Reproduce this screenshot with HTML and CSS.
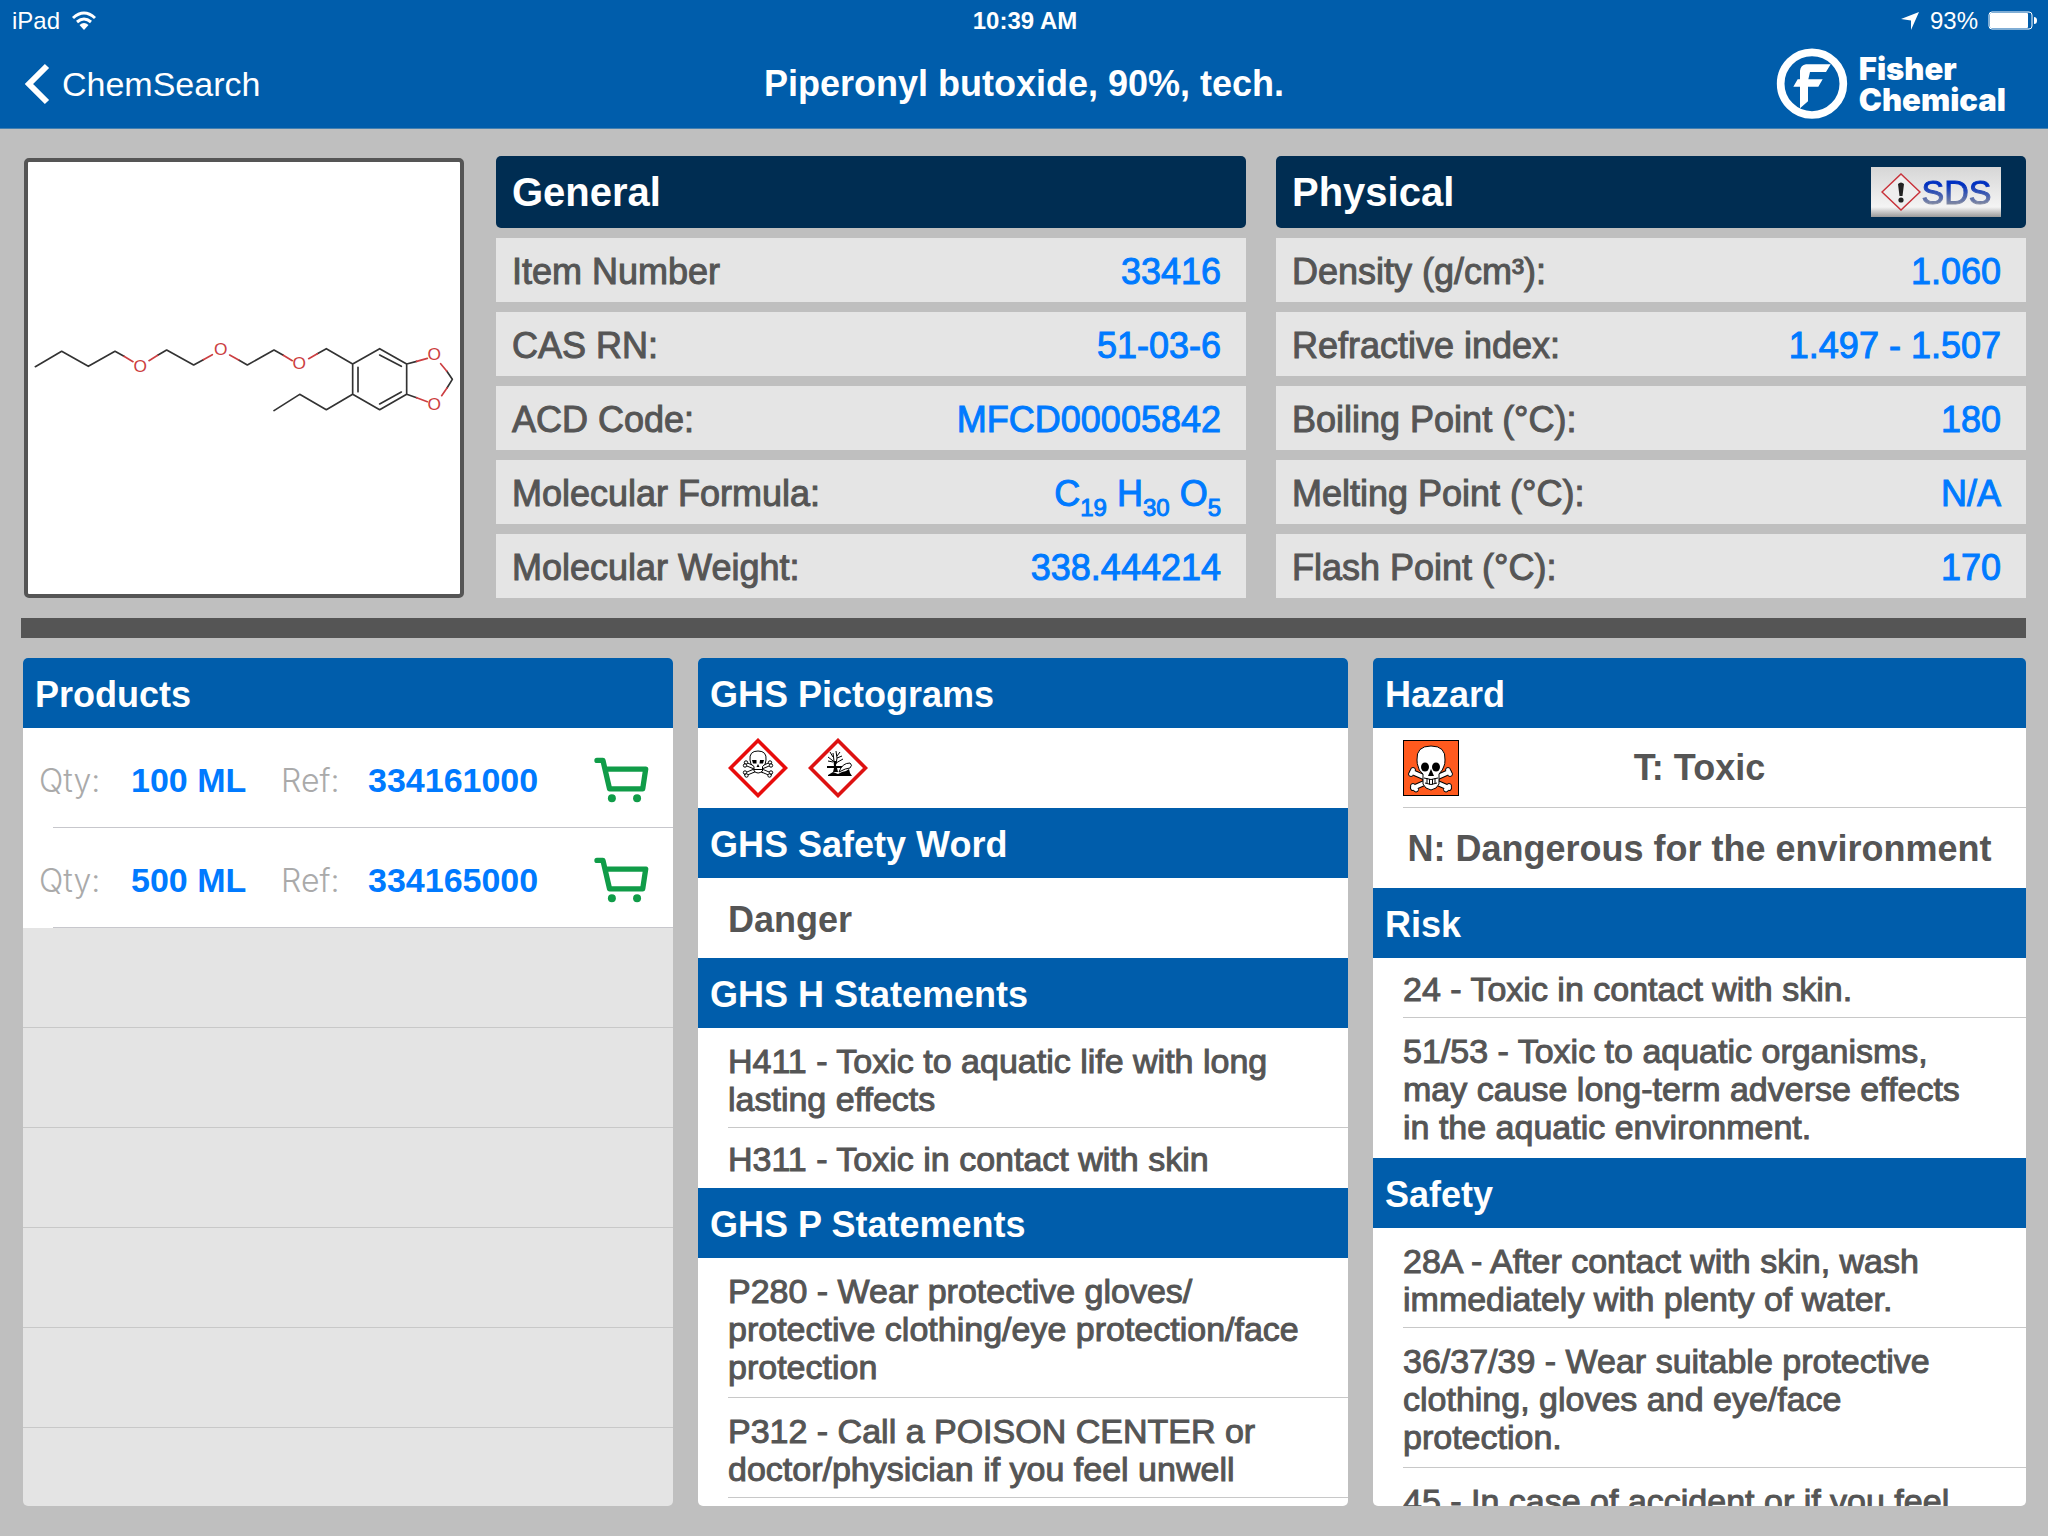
FILE: index.html
```html
<!DOCTYPE html>
<html lang="en">
<head>
<meta charset="utf-8">
<title>Piperonyl butoxide, 90%, tech.</title>
<link rel="stylesheet" href="styles.css">
</head>
<body>
<svg class="defs" aria-hidden="true">
  <symbol id="cart" viewBox="44 112 166 138">
    <path d="M53 122H71L91 208H191L200 148H79" fill="none" stroke="#109c48" stroke-width="16" stroke-linecap="round" stroke-linejoin="round"/>
    <circle cx="98" cy="236" r="12" fill="#109c48"/><circle cx="174" cy="236" r="12" fill="#109c48"/>
  </symbol>
</svg>
<header class="top">
  <div class="status">
    <div class="status-side">iPad
      <svg width="26" height="20" viewBox="0 0 26 20" fill="none" stroke="#fff" stroke-width="3"><path d="M2 7Q13-3 24 7M6 11Q13 5 20 11"/><path d="M8.500 14Q13 10 17.500 14L13 19Z" fill="#fff" stroke="none"/></svg>
    </div>
    <div class="time">10:39 AM</div>
    <div class="status-side status-end">
      <svg width="20" height="20" viewBox="0 0 20 20"><path d="M19 1L11 19V9.500L1 8Z" fill="#fff"/></svg>
      <span class="percent">93%</span>
      <svg width="50" height="20" viewBox="0 0 50 20"><rect x="1" y="1" width="43" height="17" rx="3" fill="none" stroke="#fff"/><rect x="2" y="2" width="38" height="15" rx="1" fill="#fff"/><path d="M46 6Q49 6 49 9.500Q49 13 46 13Z" fill="#fff"/></svg>
    </div>
  </div>
  <nav class="nav">
    <a class="back" href="#"><svg width="26" height="42" viewBox="0 0 26 42"><path d="M23 3L5 21L23 39" fill="none" stroke="#fff" stroke-width="6"/></svg>ChemSearch</a>
    <h1 class="title">Piperonyl butoxide, 90%, tech.</h1>
    <div class="brand">
      <svg width="72" height="72" viewBox="148 146 216 216"><circle cx="256" cy="253" r="94" fill="none" stroke="#fff" stroke-width="23"/><path fill="#fff" d="M238 195H312L298 218H250L245 240H288L275 262H244V306L220 327V262H200L213 240H220V214Q222 198 238 195Z"/></svg>
      <span class="brand-name">Fisher<br>Chemical</span>
    </div>
  </nav>
</header>
<main class="page">
  <section class="summary">
    <div class="structure">
      <svg viewBox="24 -474 1296 1296" role="img" aria-label="Chemical structure">
        <g fill="none" stroke="#333" stroke-width="5" stroke-linecap="round" stroke-linejoin="round">
          <path d="M46 140L125 94L205 139L285 94L312 109M413 106L440 90L521 135L550 119M656 120L682 135L762 90L790 106M892 101L919 86L998 132V223L919 269L839 223L762 272M998 132L1079 86L1160 132V223L1079 269L998 223M1014 142V215M1079 105L1144 139M1079 252L1144 216M1160 132L1190 124M1160 223L1190 233M1280 153L1297 178L1281 204"/>
          <path stroke="#cc3f42" d="M312 109L339 125M387 122L413 106M550 119L577 104M629 105L656 120M790 106L817 122M866 116L892 101M1190 124L1222 115M1190 233L1222 245M1262 131L1280 153M1281 204L1265 227"/>
        </g>
        <g class="atoms"><text x="361" y="155">O</text><text x="602" y="106">O</text><text x="838" y="148">O</text><text x="1243" y="121">O</text><text x="1243" y="270">O</text></g>
      </svg>
    </div>
    <section class="facts">
      <h2 class="facts-head">General</h2>
      <dl class="fact-list">
        <div class="fact"><dt>Item Number</dt><dd>33416</dd></div>
        <div class="fact"><dt>CAS RN:</dt><dd>51-03-6</dd></div>
        <div class="fact"><dt>ACD Code:</dt><dd>MFCD00005842</dd></div>
        <div class="fact"><dt>Molecular Formula:</dt><dd>C<sub>19</sub> H<sub>30</sub> O<sub>5</sub></dd></div>
        <div class="fact"><dt>Molecular Weight:</dt><dd>338.444214</dd></div>
      </dl>
    </section>
    <section class="facts">
      <h2 class="facts-head">Physical
        <button class="sds" type="button"><svg width="40" height="38" viewBox="0 0 40 38"><path d="M20 1L39 19L20 37L1 19Z" fill="#eee" stroke="#c8323a" stroke-width="1.500"/><path d="M17 11Q20 8 23 11L21.500 23H18.500Z" fill="#222"/><circle cx="20" cy="27" r="2.600" fill="#222"/></svg><span class="sds-text">SDS</span></button>
      </h2>
      <dl class="fact-list">
        <div class="fact"><dt>Density (g/cm³):</dt><dd>1.060</dd></div>
        <div class="fact"><dt>Refractive index:</dt><dd>1.497 - 1.507</dd></div>
        <div class="fact"><dt>Boiling Point (°C):</dt><dd>180</dd></div>
        <div class="fact"><dt>Melting Point (°C):</dt><dd>N/A</dd></div>
        <div class="fact"><dt>Flash Point (°C):</dt><dd>170</dd></div>
      </dl>
    </section>
  </section>
  <hr class="divider">
  <div class="panels">
    <section class="panel panel-products">
      <h2 class="bar">Products</h2>
      <ul class="products">
        <li class="product"><span class="hint">Qty:</span><span class="val">100 ML</span><span class="hint">Ref:</span><span class="val">334161000</span><button class="cart" type="button" aria-label="Add to cart"><svg width="55" height="46"><use href="#cart"/></svg></button></li>
        <li class="product"><span class="hint">Qty:</span><span class="val">500 ML</span><span class="hint">Ref:</span><span class="val">334165000</span><button class="cart" type="button" aria-label="Add to cart"><svg width="55" height="46"><use href="#cart"/></svg></button></li>
      </ul>
      <div class="empty-rows"></div>
    </section>
    <section class="panel">
      <h2 class="bar">GHS Pictograms</h2>
      <div class="pictograms">
        <svg width="60" height="60" viewBox="0 0 60 60" role="img" aria-label="Acute toxicity">
          <path d="M30 2.500L57.500 30L30 57.500L2.500 30Z" fill="#fff" stroke="#e80c0c" stroke-width="3.600"/>
          <g fill="none" stroke-linecap="round"><path d="M18 26L42 36M42 26L18 36" stroke="#000" stroke-width="4"/><path d="M18 26L42 36M42 26L18 36" stroke="#fff" stroke-width="2"/></g>
          <g fill="#fff" stroke="#000"><circle cx="18" cy="24.500" r="1.700"/><circle cx="17" cy="27.500" r="1.700"/><circle cx="42" cy="24.500" r="1.700"/><circle cx="43" cy="27.500" r="1.700"/><circle cx="17" cy="34.500" r="1.700"/><circle cx="18.500" cy="37.500" r="1.700"/><circle cx="43" cy="34.500" r="1.700"/><circle cx="41.500" cy="37.500" r="1.700"/>
          <path d="M22 22Q21 13 30 13Q39 13 38 22Q38 27 34.500 28.500V33Q30 37 26 33V28.500Q22 27 22 22Z"/></g>
          <path d="M24 22H28.500V25.500H25ZM32 22H36L35 25.500H31.500ZM30 26L31.500 29H28.500ZM26 31H34V32H26Z"/>
        </svg>
        <svg width="60" height="60" viewBox="0 0 60 60" role="img" aria-label="Environmental hazard">
          <path d="M30 2.500L57.500 30L30 57.500L2.500 30Z" fill="#fff" stroke="#dd1212" stroke-width="3.600"/>
          <path d="M26.500 24L20 19M26 23L25 15M25 19L22 14M28 26L29 20L34 18M29 20L28 13M29 18L32 14M28 25L35 21M25 24L20 23" fill="none" stroke="#000"/>
          <path d="M25.500 23H28.500L28 28H35V30H29L30 34H25L26 30H19V28H26ZM20 37L25 34L30 36L34 34L38 33L41 31L42 35L44 38H20Z"/>
          <path d="M31 34Q34 25 42 25Q45 27 42 30Q38 30 31 34Z" fill="#fff" stroke="#000"/>
        </svg>
      </div>
      <h2 class="bar">GHS Safety Word</h2>
      <p class="strong-row">Danger</p>
      <h2 class="bar">GHS H Statements</h2>
      <ul class="statements">
        <li class="two">H411 - Toxic to aquatic life with long<br>lasting effects</li>
        <li>H311 - Toxic in contact with skin</li>
      </ul>
      <h2 class="bar">GHS P Statements</h2>
      <ul class="statements open">
        <li class="three">P280 - Wear protective gloves/<br>protective clothing/eye protection/face<br>protection</li>
        <li class="two">P312 - Call a POISON CENTER or<br>doctor/physician if you feel unwell</li>
      </ul>
    </section>
    <section class="panel">
      <h2 class="bar">Hazard</h2>
      <ul class="hazards">
        <li class="hazard">
          <svg width="56" height="56" viewBox="0 0 56 56" role="img" aria-label="Toxic">
            <rect x=".5" y=".5" width="55" height="55" fill="#ff5a1e" stroke="#000"/>
            <g fill="none" stroke-linecap="round"><path d="M9 32L46 48M46 32L10 48" stroke="#000" stroke-width="6"/></g>
            <g fill="#fff" stroke="#000"><circle cx="10" cy="30" r="2.500"/><circle cx="8" cy="34" r="2.500"/><circle cx="45" cy="30" r="2.500"/><circle cx="47" cy="34" r="2.500"/><circle cx="10" cy="46" r="2.500"/><circle cx="13" cy="49.500" r="2.500"/><circle cx="46" cy="46" r="2.500"/><circle cx="43" cy="49.500" r="2.500"/></g>
            <path d="M9 32L46 48M46 32L10 48" stroke="#fff" stroke-width="4" stroke-linecap="round"/>
            <path d="M14 20Q13 6 28 6Q43 6 42 20Q42 24 41 26Q40 30 36 34V44Q34 49 28 50Q22 49 20 44V34Q15 30 15 26Q14 24 14 20Z" fill="#fff" stroke="#000"/>
            <ellipse cx="22" cy="27" rx="4" ry="4.500"/><ellipse cx="33" cy="27" rx="4" ry="4.500"/><path d="M28 29L31 36H25Z"/>
            <path d="M21 38Q28 41 35 38M22 43Q28 46 34 43M24 38V43M26.500 39V44.500M29.500 39V44.500M32 38V43" fill="none" stroke="#000"/>
          </svg>
          <span>T: Toxic</span>
        </li>
        <li class="hazard hazard-plain">N: Dangerous for the environment</li>
      </ul>
      <h2 class="bar">Risk</h2>
      <ul class="statements">
        <li>24 - Toxic in contact with skin.</li>
        <li class="three">51/53 - Toxic to aquatic organisms,<br>may cause long-term adverse effects<br>in the aquatic environment.</li>
      </ul>
      <h2 class="bar">Safety</h2>
      <ul class="statements">
        <li class="two">28A - After contact with skin, wash<br>immediately with plenty of water.</li>
        <li class="three">36/37/39 - Wear suitable protective<br>clothing, gloves and eye/face<br>protection.</li>
        <li class="three">45 - In case of accident or if you feel</li>
      </ul>
    </section>
  </div>
</main>
</body>
</html>
```
FILE: styles.css
```css
* { box-sizing: border-box; }
body {
  margin: 0;
  height: 100vh;
  display: flex;
  flex-direction: column;
  overflow: hidden;
  background: #bfbfbf;
  color: #555;
  font-family: "Liberation Sans", Arial, sans-serif;
  font-size: 36px;
}
h1, h2, p, ul, dl, dd { margin: 0; padding: 0; }
ul { list-style: none; }
svg { display: block; flex: none; }
button { border: 0; padding: 0; background: none; font: inherit; cursor: pointer; }
.defs { position: absolute; width: 0; height: 0; }

.top { background: #005dab; color: #fff; border-bottom: 1px solid #4480b0; }
.status {
  display: grid;
  grid-template-columns: 1fr auto 1fr;
  align-items: center;
  height: 40px;
  padding: 2px 10px 0 12px;
  font-size: 24px;
}
.status-side { display: flex; align-items: center; gap: 11px; }
.status-end { justify-content: flex-end; gap: 10px; }
.time { font-weight: bold; }
.nav {
  display: grid;
  grid-template-columns: 1fr auto 1fr;
  align-items: center;
  height: 88px;
  padding: 0 42px 0 24px;
}
.back { display: flex; align-items: center; gap: 12px; color: #fff; font-size: 34px; text-decoration: none; }
.title { padding-left: 18px; font-size: 36px; }
.brand { display: flex; align-items: center; justify-content: flex-end; gap: 11px; }
.brand-name { font: 900 31px/31px Inter, sans-serif; }

.page { flex: 1; min-height: 0; display: flex; flex-direction: column; padding: 27px 22px 30px 23px; }
.summary { display: grid; grid-template-columns: 443px 1fr 1fr; gap: 30px; }
.structure {
  width: 440px;
  height: 440px;
  margin-left: 1px;
  align-self: end;
  background: #fff;
  border: 4px solid #555;
  border-radius: 5px;
}
.atoms { font-size: 52px; fill: #cc3f42; text-anchor: middle; }
.facts-head {
  display: flex;
  align-items: center;
  justify-content: space-between;
  height: 72px;
  padding: 0 25px 0 16px;
  border-radius: 5px;
  background: #002d52;
  color: #fff;
  font-size: 40px;
}
.fact-list { display: grid; gap: 10px; margin-top: 10px; }
.fact {
  display: flex;
  align-items: center;
  justify-content: space-between;
  height: 64px;
  padding: 4px 25px 0 16px;
  background: #e5e5e5;
  -webkit-text-stroke: 1px;
}
.fact dd { color: #007aff; }
.fact sub { font-size: 24px; line-height: 1px; vertical-align: -10px; }
.sds {
  display: flex;
  align-items: center;
  justify-content: center;
  gap: 1px;
  width: 130px;
  height: 50px;
  background: linear-gradient(#d6d6d6, #f4f4f4 80%, #9a9a9a);
}
.sds-text {
  background: linear-gradient(#0030c0 30%, #8088a0 80%);
  background-clip: text;
  color: transparent;
  font-size: 34px;
  font-weight: normal;
  -webkit-text-stroke: 1px transparent;
}
.divider { width: calc(100% + 2px); height: 20px; flex: none; margin: 20px 0 20px -2px; border: 0; background: #555; }

.panels { flex: 1; min-height: 0; display: grid; grid-template-columns: 650fr 650fr 653fr; gap: 25px; }
.panel { min-height: 0; overflow-y: auto; scrollbar-width: none; background: #fff; border-radius: 5px; }
.bar { height: 70px; padding-left: 12px; background: #005dab; color: #fff; font-size: 36px; line-height: 74px; }
.panel-products { display: flex; flex-direction: column; background: #e4e4e4; }
.products { background: #fff; }
.product {
  display: grid;
  grid-template-columns: 92px 150px 87px 1fr auto;
  align-items: center;
  height: 100px;
  padding: 4px 24px 0 16px;
  background: linear-gradient(#c7c7cc, #c7c7cc) 30px 100% / 100% 1px no-repeat;
  font-size: 34px;
}
.hint { color: #aaa; font-family: Inter, sans-serif; font-weight: 300; font-size: 32px; }
.val { color: #007aff; font-weight: bold; }
.empty-rows { flex: 1; background: repeating-linear-gradient(transparent 0 99px, #c8c8c8 99px 100px); }

.pictograms { display: flex; align-items: center; gap: 20px; height: 80px; padding-left: 30px; }
.strong-row { height: 80px; padding-left: 30px; font-weight: bold; line-height: 84px; }
.statements, .hazards { padding-left: 30px; }
.statements { font-size: 34px; line-height: 38px; -webkit-text-stroke: 1px; }
.statements li { min-height: 60px; padding-top: 12px; border-bottom: 1px solid #c8c8c8; }
.statements .two { min-height: 100px; padding-top: 14px; }
.statements .three { min-height: 140px; padding-top: 14px; }
.statements:not(.open) li:last-child { border-bottom: 0; }
.hazard {
  display: grid;
  grid-template-columns: 56px 1fr 56px;
  align-items: center;
  height: 80px;
  padding-right: 30px;
  border-bottom: 1px solid #c8c8c8;
  font-weight: bold;
  text-align: center;
}
.hazard-plain { display: block; line-height: 82px; border: 0; }
```
